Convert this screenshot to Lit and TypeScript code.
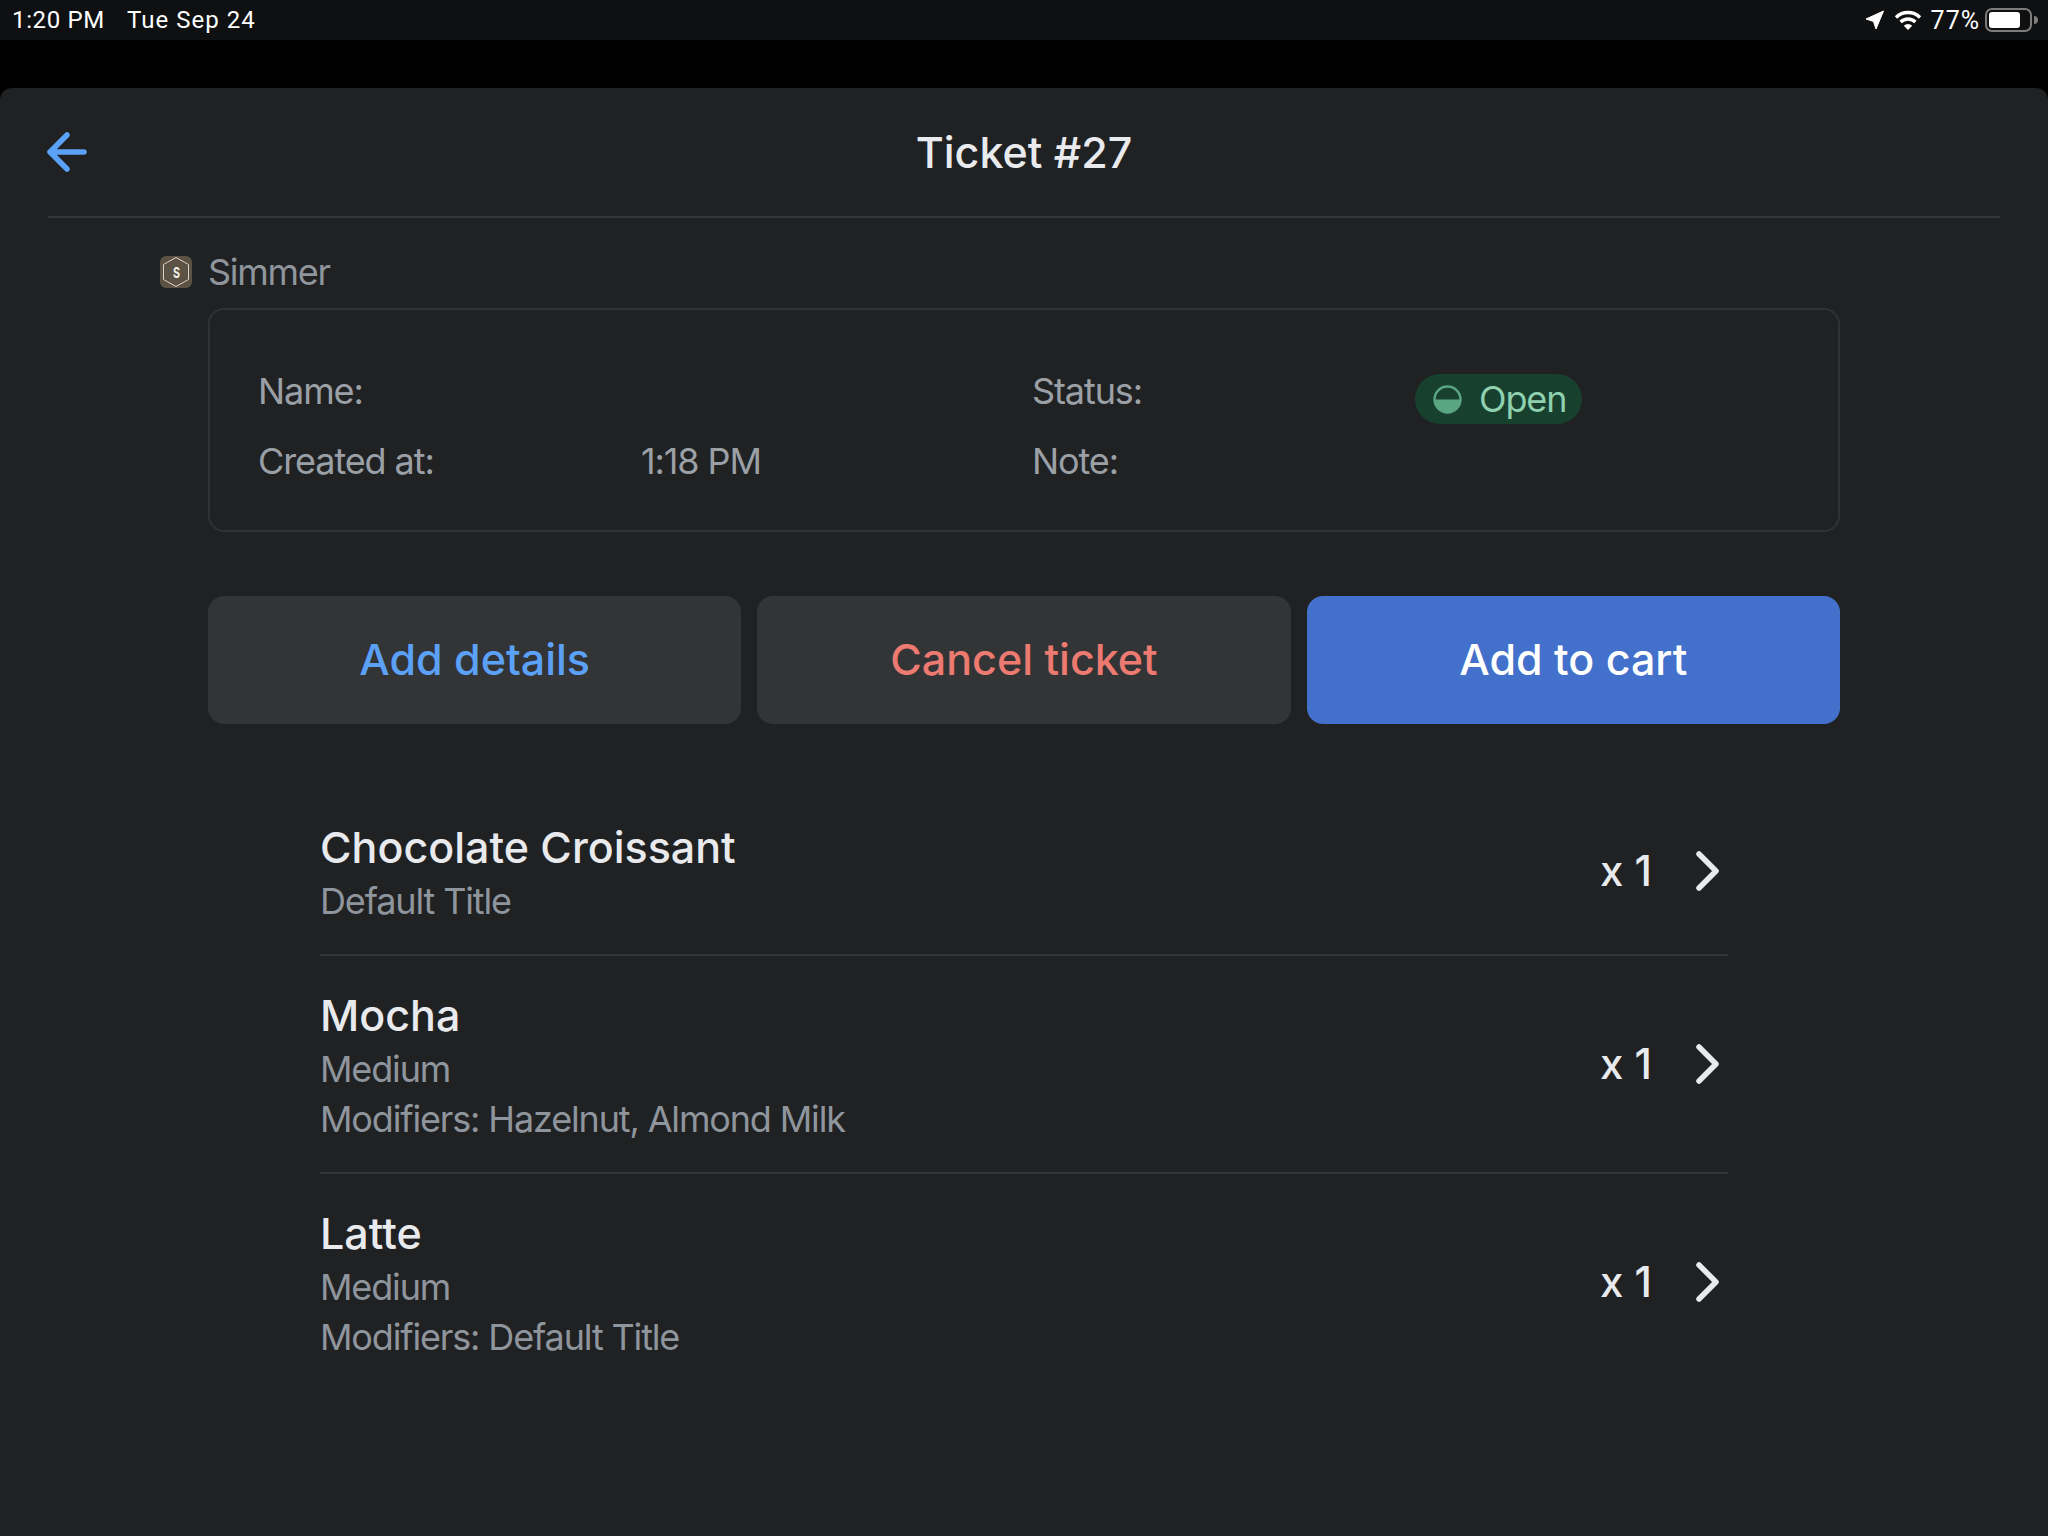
import { LitElement, html, css } from "lit";
import { customElement } from "lit/decorators.js";

const items = [
  { name: "Chocolate Croissant", lines: ["Default Title"] },
  { name: "Mocha", lines: ["Medium", "Modifiers: Hazelnut, Almond Milk"] },
  { name: "Latte", lines: ["Medium", "Modifiers: Default Title"] },
];

@customElement("app-root")
export class AppRoot extends LitElement {
  static styles = css`
    :host { display: block; width: 2048px; height: 1536px; background: #000; font-family: Inter, "Liberation Sans", sans-serif; overflow: hidden; }
    .status { height: 40px; background: #0f1011; color: #fff; display: flex; align-items: center; justify-content: space-between; padding: 0 10px 0 12px; font-size: 24px; letter-spacing: 0.65px; font-family: Roboto, Inter, sans-serif; }
    .status-left { display: flex; gap: 22px; }
    .date { letter-spacing: 1.05px; }
    .status-right { display: flex; align-items: center; }
    .status-right .pct { margin: 0 5px 0 9px; font-size: 25px; letter-spacing: 1px; }
    .wifi { margin-left: 9px; }
    .gap { height: 48px; background: #000; }
    .card { height: 1448px; background: #202123; border-radius: 12px 12px 0 0; padding: 0 48px; box-sizing: border-box; }
    .head { height: 128px; border-bottom: 2px solid #333538; display: flex; align-items: center; justify-content: center; position: relative; }
    .title { color: #e8eaed; font-size: 43px; font-weight: 500; }
    .back { position: absolute; left: -1px; top: 44px; }
    .body { padding: 0 160px; }
    .brand { display: flex; align-items: center; gap: 16px; height: 90px; margin-left: -48px; padding-top: 17px; box-sizing: border-box; color: #8f959c; font-size: 36px; letter-spacing: -1.3px; }
    .info { height: 224px; box-sizing: border-box; border: 2px solid #303235; border-radius: 16px; display: grid; grid-template-columns: 383px 391px 383px 1fr; grid-template-rows: 70px 70px; padding: 46px 0 0 48px; color: #9aa0a6; font-size: 36px; letter-spacing: -1.1px; align-items: center; }
    .info > div { height: 70px; display: flex; align-items: center; }
    .badge { display: inline-flex; align-items: center; height: 50px; width: 167px; box-sizing: border-box; padding-left: 18px; gap: 17px; border-radius: 25px; background: #18402f; color: #8fd0ae; position: relative; top: 8px; }
    .buttons { display: grid; grid-template-columns: repeat(3, 1fr); gap: 16px; margin-top: 64px; }
    .btn { height: 128px; box-sizing: border-box; padding-bottom: 2px; border-radius: 16px; background: #333436; display: flex; align-items: center; justify-content: center; font-size: 43px; font-weight: 500; }
    .blue { color: #5ba1f7; }
    .red { color: #ec7a70; }
    .primary { background: #4270ca; color: #fff; }
    .list { margin: 64px 112px 0; }
    .row { display: flex; align-items: center; justify-content: space-between; padding: 30px 8px 28px 0; }
    .row + .row { border-top: 2px solid #333538; }
    .row-name { color: #e8eaed; font-size: 43px; font-weight: 500; line-height: 58px; }
    .row-sub { color: #8f959c; font-size: 36px; letter-spacing: -1.15px; line-height: 50px; }
    .qty { display: flex; align-items: center; gap: 44px; color: #e8eaed; font-size: 42px; font-weight: 500; position: relative; top: -2px; }
    .chev { position: relative; top: 1px; }
  `;

  private chevron() {
    return html`<svg class="chev" width="24" height="40" viewBox="0 0 24 40" fill="none" stroke="#e8eaed" stroke-width="5.5" stroke-linecap="round" stroke-linejoin="round"><path d="M3 3 L20 20 L3 37"/></svg>`;
  }

  render() {
    return html`
      <div class="status">
        <div class="status-left"><span>1:20 PM</span><span class="date">Tue Sep 24</span></div>
        <div class="status-right">
          <svg width="20" height="20" viewBox="0 0 20 20"><path d="M18.5 1 L1 9 L8.5 11.5 L11 19 Z" fill="#fff" stroke="#fff" stroke-width="1" stroke-linejoin="round"/></svg>
          <svg class="wifi" width="28" height="22" viewBox="0 0 28 22" fill="none" stroke="#fff" stroke-width="3.4"><path d="M2 8.5 A17 17 0 0 1 26 8.5"/><path d="M6.6 13 A10.5 10.5 0 0 1 21.4 13"/><path d="M14 21 L9.8 16.8 A6 6 0 0 1 18.2 16.8 Z" fill="#fff" stroke="none"/></svg>
          <span class="pct">77%</span>
          <svg width="53" height="24" viewBox="0 0 53 24"><rect x="1" y="1" width="45" height="22" rx="6" fill="none" stroke="#7c7c7c" stroke-width="2"/><rect x="4" y="4" width="31" height="16" rx="3" fill="#fff"/><path d="M49 8 A4 4 0 0 1 49 16 Z" fill="#7c7c7c"/></svg>
        </div>
      </div>
      <div class="gap"></div>
      <div class="card">
        <div class="head">
          <svg class="back" width="40" height="40" viewBox="0 0 40 40" fill="none" stroke="#5ba1f7" stroke-width="5.5" stroke-linecap="round" stroke-linejoin="round"><path d="M3 20 H37 M20 3 L3 20 L20 37" /></svg>
          <div class="title">Ticket #27</div>
        </div>
        <div class="body">
          <div class="brand">
            <svg width="32" height="32" viewBox="0 0 32 32"><rect width="32" height="32" rx="6" fill="#5c5244"/><path d="M16 1.5 L28.5 8.5 V23.5 L16 30.5 L3.5 23.5 V8.5 Z" fill="none" stroke="#d8d3c8" stroke-width="1"/><text transform="translate(16 21.5) scale(0.72 1)" font-size="15" font-weight="700" text-anchor="middle" fill="#f1eee6" font-family="Inter, sans-serif">S</text></svg>
            <span>Simmer</span>
          </div>
          <div class="info">
            <div>Name:</div><div></div>
            <div>Status:</div>
            <div><span class="badge"><svg width="29" height="29" viewBox="0 0 29 29"><circle cx="14.5" cy="14.5" r="13" fill="none" stroke="#5aa582" stroke-width="2.4"/><path d="M1.5 14.5 H27.5 A13 13 0 0 1 1.5 14.5 Z" fill="#5aa582"/></svg><span>Open</span></span></div>
            <div>Created at:</div><div>1:18 PM</div>
            <div>Note:</div><div></div>
          </div>
          <div class="buttons">
            <div class="btn blue">Add details</div>
            <div class="btn red">Cancel ticket</div>
            <div class="btn primary">Add to cart</div>
          </div>
          <div class="list">
            ${items.map(
              (it) => html`<div class="row">
                <div>
                  <div class="row-name">${it.name}</div>
                  ${it.lines.map((l) => html`<div class="row-sub">${l}</div>`)}
                </div>
                <div class="qty"><span>x 1</span>${this.chevron()}</div>
              </div>`
            )}
          </div>
        </div>
      </div>
    `;
  }
}
